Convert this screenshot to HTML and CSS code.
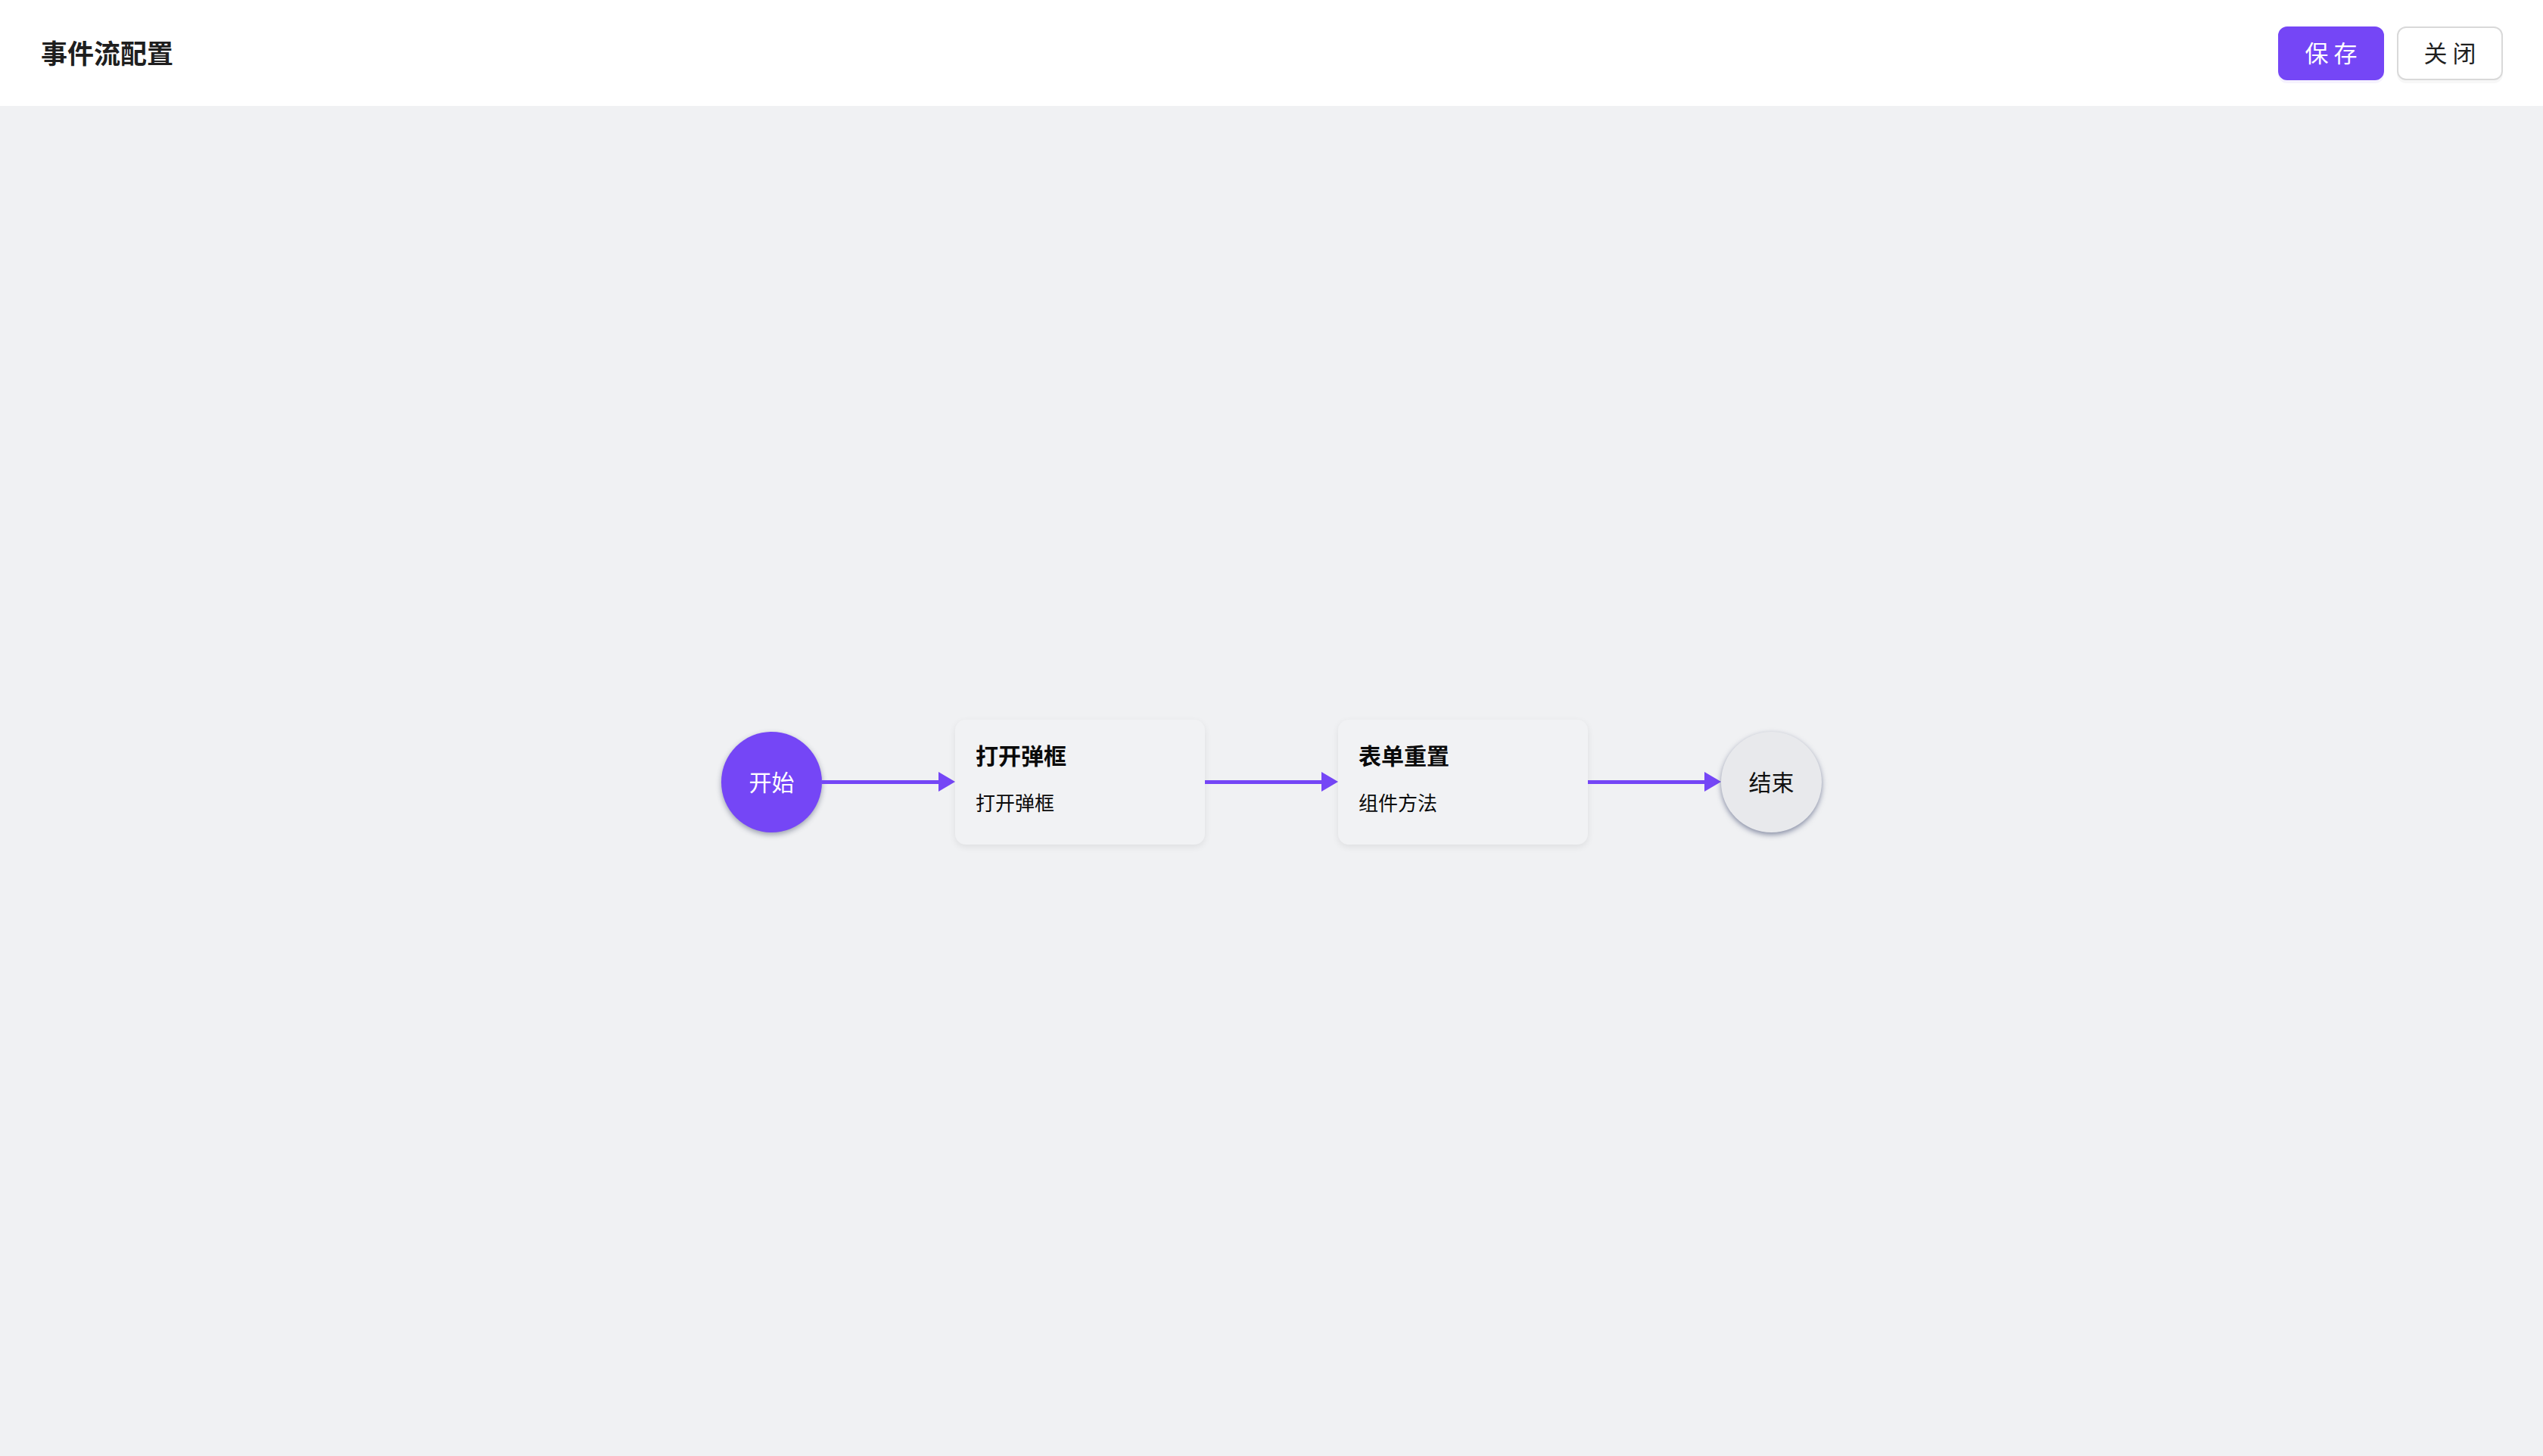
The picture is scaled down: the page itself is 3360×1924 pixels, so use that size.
FILE: index.html
```html
<!DOCTYPE html>
<html lang="zh-CN">
<head>
<meta charset="utf-8">
<title>事件流配置</title>
<link rel="stylesheet" href="styles.css">
</head>
<body>
<div class="page">
  <header class="header">
    <h1 class="title">事件流配置</h1>
    <div class="actions">
      <button class="btn btn-primary">保 存</button>
      <button class="btn btn-default">关 闭</button>
    </div>
  </header>
  <main class="canvas">
    <div class="flow">
      <div class="circle circle-start">开始</div>
      <div class="edge"><span class="line"></span><span class="head"></span></div>
      <div class="card">
        <div class="card-title">打开弹框</div>
        <div class="card-sub">打开弹框</div>
      </div>
      <div class="edge"><span class="line"></span><span class="head"></span></div>
      <div class="card">
        <div class="card-title">表单重置</div>
        <div class="card-sub">组件方法</div>
      </div>
      <div class="edge"><span class="line"></span><span class="head"></span></div>
      <div class="circle circle-end">结束</div>
    </div>
  </main>
</div>
</body>
</html>
```

FILE: styles.css
```css
* { box-sizing: border-box; }
html, body {
  margin: 0;
  padding: 0;
  height: 100%;
}
body {
  font-family: "Noto Sans CJK SC", "Noto Sans", sans-serif;
  background: #f0f1f3;
  color: #1f1f1f;
}
.page {
  display: flex;
  flex-direction: column;
  height: 1924px;
}
.header {
  height: 140px;
  flex: 0 0 140px;
  background: #ffffff;
  display: flex;
  align-items: center;
  justify-content: space-between;
  padding: 0 53px 0 54px;
}
.title {
  margin: 0 0 4px 0;
  font-size: 35px;
  font-weight: 700;
  color: #1f1f1f;
  line-height: 1;
}
.actions {
  display: flex;
  gap: 17px;
}
.btn {
  width: 140px;
  height: 71px;
  border-radius: 12px;
  font-family: "Noto Sans CJK SC", sans-serif;
  font-size: 31px;
  line-height: 1;
  cursor: pointer;
  padding: 0 0 3px 0;
}
.btn-primary {
  background: #7546f6;
  color: #ffffff;
  border: 2px solid #7546f6;
  box-shadow: 0 4px 0 rgba(117, 70, 246, 0.07);
}
.btn-default {
  background: #ffffff;
  color: #1f1f1f;
  border: 2px solid #d9d9d9;
  box-shadow: 0 4px 0 rgba(0, 0, 0, 0.03);
}
.canvas {
  flex: 1;
  display: flex;
  align-items: center;
  justify-content: center;
}
.flow {
  display: flex;
  align-items: center;
  position: relative;
  top: 1px;
}
.circle {
  width: 133px;
  height: 133px;
  border-radius: 50%;
  display: flex;
  align-items: center;
  justify-content: center;
  font-size: 30px;
  line-height: 1;
  padding-bottom: 3px;
}
.circle-start {
  background: #7546f6;
  color: #ffffff;
  box-shadow: 0 3px 7px rgba(50, 60, 90, 0.45);
}
.circle-end {
  background: #e8e9ec;
  color: #111111;
  box-shadow: 0 3px 7px rgba(50, 60, 100, 0.55);
}
.edge {
  width: 176px;
  display: flex;
  align-items: center;
}
.line {
  flex: 1;
  height: 5px;
  background: #7546f6;
}
.head {
  width: 0;
  height: 0;
  border-top: 13px solid transparent;
  border-bottom: 13px solid transparent;
  border-left: 22px solid #7546f6;
}
.card {
  width: 330px;
  height: 165px;
  background: #f1f2f4;
  border-radius: 14px;
  box-shadow: 0 3px 10px rgba(0, 0, 0, 0.08);
  padding: 25px 27px 0 27px;
  display: flex;
  flex-direction: column;
}
.card-title {
  font-size: 30px;
  font-weight: 700;
  line-height: 42px;
  color: #0a0a0a;
}
.card-sub {
  margin-top: 24px;
  font-size: 26px;
  line-height: 36px;
  color: #0a0a0a;
}
```
